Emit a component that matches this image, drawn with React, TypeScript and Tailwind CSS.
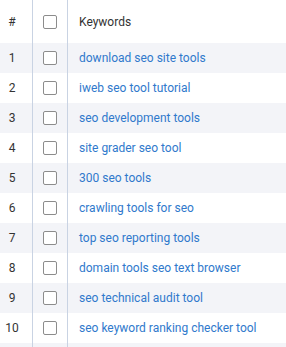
import React from "react";

const KEYWORDS = [
  "download seo site tools",
  "iweb seo tool tutorial",
  "seo development tools",
  "site grader seo tool",
  "300 seo tools",
  "crawling tools for seo",
  "top seo reporting tools",
  "domain tools seo text browser",
  "seo technical audit tool",
  "seo keyword ranking checker tool",
];

function Checkbox() {
  return <div className="h-[14px] w-[14px] rounded-[2px] border border-[#8c8c8c] bg-white" />;
}

function Row({
  index,
  label,
  striped,
  header,
}: {
  index?: string;
  label?: string;
  striped?: boolean;
  header?: boolean;
}) {
  return (
    <div
      className={`flex ${header ? "h-[43px]" : "h-[30px]"} ${striped ? "bg-[#f3f4f8]" : "bg-white"}`}
    >
      <div className="flex w-[33px] shrink-0 items-center justify-center border-r border-[#c9d3e3] pr-[8px] text-[12px] text-[#333]">
        {index}
      </div>
      <div className="flex w-[35px] shrink-0 items-center justify-center border-r border-[#c9d3e3]">
        {label !== undefined && <Checkbox />}
      </div>
      <div
        className={`flex min-w-0 flex-1 items-center pl-[11px] text-[12px] ${
          header ? "text-[#333]" : "text-[#3079cc]"
        }`}
      >
        {label}
      </div>
    </div>
  );
}

export default function App() {
  return (
    <div
      className="h-[347px] w-[286px] overflow-hidden bg-white"
      style={{ fontFamily: "Roboto, 'Liberation Sans', sans-serif" }}
    >
      <Row header index="#" label="Keywords" />
      {KEYWORDS.map((k, i) => (
        <Row key={k} index={String(i + 1)} label={k} striped={i % 2 === 0} />
      ))}
      <Row striped />
    </div>
  );
}
